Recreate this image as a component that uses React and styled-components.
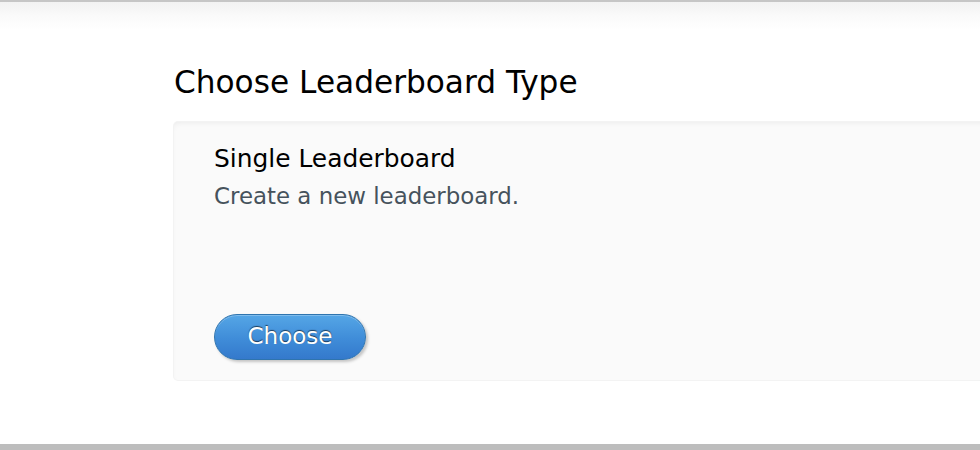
import React from 'react';
import styled, { createGlobalStyle } from 'styled-components';

const Global = createGlobalStyle`
  html, body {
    margin: 0;
    padding: 0;
    background: #fff;
    font-family: "DejaVu Sans", "Liberation Sans", sans-serif;
  }
`;

const Page = styled.div`
  width: 980px;
  height: 450px;
  overflow: hidden;
  display: flex;
  flex-direction: column;
  box-sizing: border-box;
  border-top: 2px solid #c6c6c6;
  border-bottom: 6px solid #bdbdbd;
  background: linear-gradient(#f2f2f2 0px, #fafafa 14px, #fff 28px, #fff 100%);
`;

const Content = styled.main`
  flex: 1;
  padding: 60px 0 0 174px;
`;

const Heading = styled.h1`
  margin: 0;
  font-size: 31.2px;
  font-weight: normal;
  color: #000;
  line-height: 40px;
`;

const Card = styled.section`
  margin-top: 20px;
  width: 900px;
  height: 258px;
  box-sizing: border-box;
  padding: 20px 40px 20px;
  display: flex;
  flex-direction: column;
  background: #fafafa;
  border-radius: 4px;
  box-shadow: inset 0 3px 6px -3px rgba(0, 0, 0, 0.08), 0 0 0 1px #f3f3f3;
`;

const Title = styled.h2`
  margin: 0;
  font-size: 24.9px;
  font-weight: normal;
  color: #000;
  line-height: 34px;
`;

const Desc = styled.p`
  margin: 3px 0 0;
  font-size: 22.9px;
  color: #46525c;
  line-height: 34px;
`;

const ChooseButton = styled.button.attrs({ type: 'button' })`
  margin-top: auto;
  align-self: flex-start;
  width: 152px;
  height: 46px;
  padding: 0 0 3px;
  border-radius: 23px;
  border: 1px solid #2f74ae;
  background: linear-gradient(#55a6e6, #3f8cd8 55%, #3479cc);
  color: #fff;
  font-family: inherit;
  font-size: 23px;
  text-shadow: 0 -1px 1px rgba(0, 0, 0, 0.6);
  box-shadow: inset 0 1px 0 rgba(255, 255, 255, 0.25), 2px 2px 3px rgba(0, 0, 0, 0.22);
  cursor: pointer;
`;

export default function App() {
  return (
    <Page>
      <Global />
      <Content>
        <Heading>Choose Leaderboard Type</Heading>
        <Card>
          <Title>Single Leaderboard</Title>
          <Desc>Create a new leaderboard.</Desc>
          <ChooseButton>Choose</ChooseButton>
        </Card>
      </Content>
    </Page>
  );
}
